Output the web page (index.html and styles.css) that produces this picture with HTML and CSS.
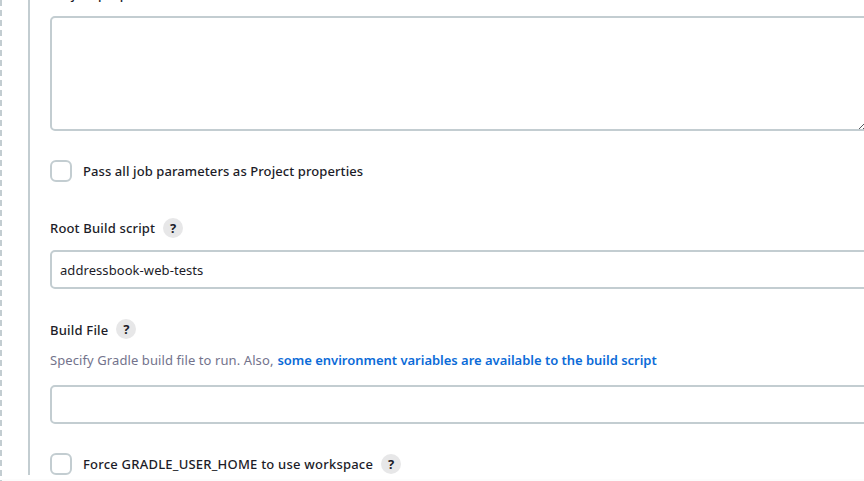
FILE: index.html
```html
<!DOCTYPE html>
<html lang="en">
<head>
<meta charset="utf-8">
<title>Gradle build step</title>
<link rel="stylesheet" href="styles.css">
</head>
<body>
<main class="step">
  <div class="rail"></div>
  <form class="fields">
    <label class="label label-project"><span class="t-project">Project properties</span></label>
    <div class="area-wrap">
      <textarea class="area" aria-label="Project properties"></textarea>
      <svg class="grip" width="9" height="9" viewBox="0 0 9 9" shape-rendering="crispEdges"><path d="M0 5h1v-1h1v-1h1v-1h1v-1h1v-1h1v1h-1v1h-1v1h-1v1h-1v1h-1v1h-1zM4 5h1v-1h1v-1h1v1h-1v1h-1v1h-1z" fill="#55565b"/></svg>
    </div>
    <div class="row check-row">
      <span class="box"></span><span class="label t-pass">Pass all job parameters as Project properties</span>
    </div>
    <div class="row root-row">
      <span class="label t-root">Root Build script</span><span class="help">?</span>
    </div>
    <div class="input"><span class="t-value">addressbook-web-tests</span></div>
    <div class="row file-row">
      <span class="label t-file">Build File</span><span class="help">?</span>
    </div>
    <div class="description"><span class="t-desc">Specify Gradle build file to run. Also,</span><a class="t-link">some environment variables are available to the build script</a></div>
    <div class="input"></div>
    <div class="row force-row">
      <span class="box"></span><span class="label t-force">Force GRADLE_USER_HOME to use workspace</span><span class="help">?</span>
    </div>
  </form>
</main>
<div class="footer"></div>
</body>
</html>
```
FILE: styles.css
```css
* { box-sizing: border-box; }
body {
  margin: 0;
  height: 481px;
  overflow: hidden;
  background: repeating-linear-gradient(#c3cdd1 0 6px, #fff 6px 10px) 0 0 / 2px 100% no-repeat #fff;
  color: #1c1c28;
  font-family: "Noto Sans", sans-serif;
  font-size: 13px;
  line-height: 20px;
  white-space: nowrap;
}
.step { display: flex; height: 479px; }
.rail { flex: none; width: 2px; height: 475px; margin-left: 28px; background: #c3cdd1; }
.fields { flex: none; width: 838px; padding-left: 20px; }
.label { font-weight: 500; }
.label-project { display: block; height: 20px; margin-top: -16px; letter-spacing: 0.16px; }
.area-wrap { position: relative; height: 115px; margin-top: 12px; }
.area {
  display: block;
  width: 100%;
  height: 115px;
  border: 2px solid #c3cdd1;
  border-radius: 5px;
  background: #fff;
  resize: none;
  outline: none;
}
.grip { position: absolute; left: 809px; top: 107px; }
.row { display: flex; align-items: center; height: 22px; }
.box { flex: none; width: 22px; height: 22px; margin-right: 11px; border: 2px solid #c3cdd1; border-radius: 6px; }
.help {
  width: 20px;
  height: 20px;
  margin-left: 8px;
  border-radius: 50%;
  background: #e7e7e8;
  font-size: 13px;
  font-weight: 700;
  text-align: center;
}
.check-row { margin-top: 29px; }
.root-row { margin-top: 35px; }
.input {
  height: 39px;
  margin-top: 11px;
  padding: 8px;
  border: 2px solid #c3cdd1;
  border-radius: 5px;
}
.file-row { margin-top: 29px; }
.description { display: flex; gap: 4px; height: 20px; margin: 10px 0 15px; color: #73738c; }
.description + .input { margin-top: 0; }
.t-pass { letter-spacing: 0.09px; }
.t-root { letter-spacing: 0.17px; }
.t-value { letter-spacing: 0.07px; }
.t-file { padding-top: 2px; letter-spacing: 0.2px; }
.t-desc { letter-spacing: 0.09px; }
.t-link { color: #0b6bd8; font-weight: 600; letter-spacing: -0.02px; }
.t-force { letter-spacing: 0.22px; }
.force-row { margin-top: 29px; }
.footer { height: 2px; margin-left: 2px; background: #fcfcfc; }
```
